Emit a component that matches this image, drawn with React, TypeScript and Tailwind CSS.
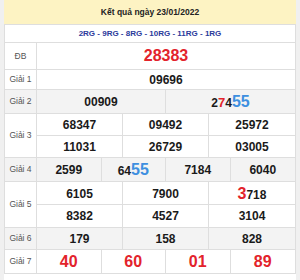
import React from "react";

const RED = "text-[#e3232b]";

function Label({ children }: { children: React.ReactNode }) {
  return (
    <div className="w-[32px] shrink-0 flex items-center justify-center border-r border-[#dedede] text-[8.5px] text-[#555]">
      {children}
    </div>
  );
}

function Num({ children, className = "" }: { children: React.ReactNode; className?: string }) {
  return (
    <div className={`flex items-center justify-center text-[12px] font-bold text-[#1a1a1a] ${className}`}>
      {children}
    </div>
  );
}

export default function App() {
  return (
    <div
      className="w-[300px] h-[280px] bg-white border-l-4 border-r-4 border-[#f0f0f0] overflow-hidden"
      style={{ fontFamily: '"Liberation Sans", Arial, sans-serif' }}
    >
      <div className="h-[24px] bg-[#fdf3c3] flex items-center justify-center text-[8.5px] font-bold text-[#222]">
        Kết quả ngày 23/01/2022
      </div>
      <div className="border-t border-l border-r border-[#dedede]">
        <div className="h-[18px] border-b border-[#dedede] flex items-center justify-center text-[8px] font-bold text-[#2b3a9b]">
          2RG - 9RG - 8RG - 10RG - 11RG - 1RG
        </div>
        <div className="h-[27px] border-b border-[#dedede] flex">
          <Label>ĐB</Label>
          <Num className={`flex-1 text-[16px] ${RED}`}>28383</Num>
        </div>
        <div className="h-[20px] border-b border-[#dedede] flex">
          <Label>Giải 1</Label>
          <Num className="flex-1">09696</Num>
        </div>
        <div className="h-[24px] border-b border-[#dedede] flex bg-[#f3f3f3]">
          <Label>Giải 2</Label>
          <div className="flex-1 grid grid-cols-2 divide-x divide-[#dedede]">
            <Num>00909</Num>
            <Num>
              <span className="flex items-baseline">
                <span>2</span>
                <span className={`${RED} text-[13px]`}>7</span>
                <span>4</span>
                <span className="text-[#3d8fe0] text-[16px]">55</span>
              </span>
            </Num>
          </div>
        </div>
        <div className="h-[44px] border-b border-[#dedede] flex">
          <Label>Giải 3</Label>
          <div className="flex-1 flex flex-col">
            <div className="h-[22px] grid grid-cols-3 divide-x divide-[#dedede] border-b border-[#dedede]">
              <Num>68347</Num>
              <Num>09492</Num>
              <Num>25972</Num>
            </div>
            <div className="flex-1 grid grid-cols-3 divide-x divide-[#dedede]">
              <Num>11031</Num>
              <Num>26729</Num>
              <Num>03005</Num>
            </div>
          </div>
        </div>
        <div className="h-[24px] border-b border-[#dedede] flex bg-[#f3f3f3]">
          <Label>Giải 4</Label>
          <div className="flex-1 grid grid-cols-4 divide-x divide-[#dedede]">
            <Num>2599</Num>
            <Num>
              <span className="flex items-baseline">
                <span>64</span>
                <span className="text-[#3d8fe0] text-[16px]">55</span>
              </span>
            </Num>
            <Num>7184</Num>
            <Num>6040</Num>
          </div>
        </div>
        <div className="h-[46px] border-b border-[#dedede] flex">
          <Label>Giải 5</Label>
          <div className="flex-1 flex flex-col">
            <div className="h-[23px] grid grid-cols-3 divide-x divide-[#dedede] border-b border-[#dedede]">
              <Num>6105</Num>
              <Num>7900</Num>
              <Num>
                <span className="flex items-baseline">
                  <span className={`${RED} text-[16px]`}>3</span>
                  <span>718</span>
                </span>
              </Num>
            </div>
            <div className="flex-1 grid grid-cols-3 divide-x divide-[#dedede]">
              <Num>8382</Num>
              <Num>4527</Num>
              <Num>3104</Num>
            </div>
          </div>
        </div>
        <div className="h-[22px] border-b border-[#dedede] flex bg-[#f3f3f3]">
          <Label>Giải 6</Label>
          <div className="flex-1 grid grid-cols-3 divide-x divide-[#dedede]">
            <Num>179</Num>
            <Num>158</Num>
            <Num>828</Num>
          </div>
        </div>
        <div className="h-[24px] border-b border-[#dedede] flex">
          <Label>Giải 7</Label>
          <div className="flex-1 grid grid-cols-4 divide-x divide-[#dedede]">
            <Num className={`text-[16px] ${RED}`}>40</Num>
            <Num className={`text-[16px] ${RED}`}>60</Num>
            <Num className={`text-[16px] ${RED}`}>01</Num>
            <Num className={`text-[16px] ${RED}`}>89</Num>
          </div>
        </div>
      </div>
    </div>
  );
}
